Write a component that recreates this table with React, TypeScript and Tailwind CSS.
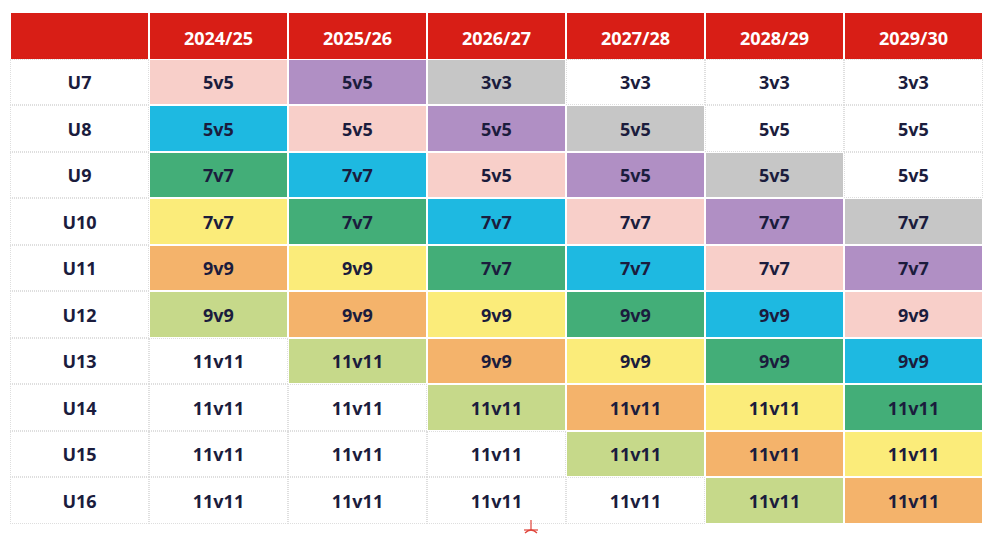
const years = ['2024/25', '2025/26', '2026/27', '2027/28', '2028/29', '2029/30'];

const colors: Record<string, string> = {
  w: 'bg-white outline outline-1 outline-dotted outline-[#dedede]',
  p: 'bg-[#f8cfc9]',
  u: 'bg-[#b08fc4]',
  g: 'bg-[#c6c6c6]',
  c: 'bg-[#1eb9e1]',
  e: 'bg-[#43ae78]',
  y: 'bg-[#fbec7a]',
  o: 'bg-[#f4b36b]',
  l: 'bg-[#c6d98a]',
};

const rows: { age: string; cells: [string, string][] }[] = [
  { age: 'U7', cells: [['p', '5v5'], ['u', '5v5'], ['g', '3v3'], ['w', '3v3'], ['w', '3v3'], ['w', '3v3']] },
  { age: 'U8', cells: [['c', '5v5'], ['p', '5v5'], ['u', '5v5'], ['g', '5v5'], ['w', '5v5'], ['w', '5v5']] },
  { age: 'U9', cells: [['e', '7v7'], ['c', '7v7'], ['p', '5v5'], ['u', '5v5'], ['g', '5v5'], ['w', '5v5']] },
  { age: 'U10', cells: [['y', '7v7'], ['e', '7v7'], ['c', '7v7'], ['p', '7v7'], ['u', '7v7'], ['g', '7v7']] },
  { age: 'U11', cells: [['o', '9v9'], ['y', '9v9'], ['e', '7v7'], ['c', '7v7'], ['p', '7v7'], ['u', '7v7']] },
  { age: 'U12', cells: [['l', '9v9'], ['o', '9v9'], ['y', '9v9'], ['e', '9v9'], ['c', '9v9'], ['p', '9v9']] },
  { age: 'U13', cells: [['w', '11v11'], ['l', '11v11'], ['o', '9v9'], ['y', '9v9'], ['e', '9v9'], ['c', '9v9']] },
  { age: 'U14', cells: [['w', '11v11'], ['w', '11v11'], ['l', '11v11'], ['o', '11v11'], ['y', '11v11'], ['e', '11v11']] },
  { age: 'U15', cells: [['w', '11v11'], ['w', '11v11'], ['w', '11v11'], ['l', '11v11'], ['o', '11v11'], ['y', '11v11']] },
  { age: 'U16', cells: [['w', '11v11'], ['w', '11v11'], ['w', '11v11'], ['w', '11v11'], ['l', '11v11'], ['o', '11v11']] },
];

export default function App() {
  return (
    <div
      className="relative w-[1000px] h-[535px] bg-white overflow-hidden pt-[13px] pl-[11px]"
      style={{ fontFamily: '"Open Sans", "Noto Sans", sans-serif' }}
    >
      <div className="grid grid-cols-[repeat(7,137px)] gap-x-[2px] gap-y-[2px] auto-rows-[44.5px] text-[18px] font-bold text-[#1b1c3d]">
        <div className="bg-[#d81e16] h-[46px]" />
        {years.map((y) => (
          <div key={y} className="bg-[#d81e16] h-[46px] flex items-center justify-center pt-[5px] text-white">
            {y}
          </div>
        ))}
        {rows.map((r) => (
          <div key={r.age} className="contents">
            <div className="flex items-center justify-center pt-[2px] bg-white outline outline-1 outline-dotted outline-[#dedede]">
              {r.age}
            </div>
            {r.cells.map(([c, t], i) => (
              <div key={i} className={`flex items-center justify-center pt-[2px] ${colors[c]}`}>
                {t}
              </div>
            ))}
          </div>
        ))}
      </div>
      <svg className="absolute left-[521px] top-[519px]" width="20" height="16" viewBox="0 0 20 16">
        <line x1="10" y1="1" x2="10" y2="11" stroke="#e0443a" strokeWidth="1.2" />
        <line x1="3" y1="11" x2="17" y2="11" stroke="#e0443a" strokeWidth="1.2" />
        <path d="M4 14 Q10 8 16 14" fill="none" stroke="#e0443a" strokeWidth="1.2" />
      </svg>
    </div>
  );
}
